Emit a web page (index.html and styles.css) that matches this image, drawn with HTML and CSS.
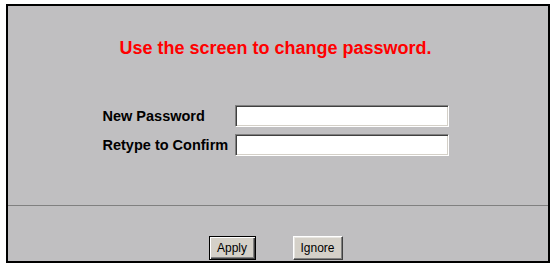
FILE: index.html
```html
<!DOCTYPE html>
<html>
<head>
<meta charset="utf-8">
<link rel="stylesheet" href="styles.css">
</head>
<body>
<div class="frame">
  <div class="title">Use the screen to change password.</div>
  <div class="form">
    <div class="row">
      <label class="label">New Password</label>
      <input class="field" type="password">
    </div>
    <div class="row">
      <label class="label">Retype to Confirm</label>
      <input class="field" type="password">
    </div>
  </div>
  <div class="rule"></div>
  <div class="buttons">
    <button class="btn btn-default">Apply</button>
    <button class="btn">Ignore</button>
  </div>
</div>
</body>
</html>
```
FILE: styles.css
```css
html, body {
  margin: 0;
  padding: 0;
  background: #fff;
}
body {
  width: 554px;
  height: 265px;
  overflow: hidden;
}
.frame {
  margin: 4px 0 0 6px;
  width: 540px;
  height: 255px;
  border: 2px solid #000;
  background: #c0bfc1;
  display: flex;
  flex-direction: column;
  font-family: "Liberation Sans", Arial, sans-serif;
  overflow: hidden;
}
.title {
  margin-top: 32px;
  padding-right: 5px;
  text-align: center;
  color: #ff0000;
  font-weight: bold;
  font-size: 18px;
  line-height: 21px;
}
.form {
  margin-top: 46px;
  align-self: center;
  margin-right: 5px;
  display: flex;
  flex-direction: column;
  gap: 7px;
}
.row {
  display: flex;
  align-items: center;
  height: 22px;
}
.label {
  width: 132px;
  font-size: 14.5px;
  font-weight: bold;
  color: #000;
  line-height: 22px;
}
.field {
  box-sizing: border-box;
  width: 214px;
  height: 22px;
  margin: 0;
  padding: 0 3px;
  background: #fff;
  border: 1px solid;
  border-color: #808080 #fff #fff #808080;
  box-shadow: inset 1px 1px 0 #404040, inset -1px -1px 0 #d4d0c8;
  outline: none;
}
.rule {
  margin-top: 49px;
  height: 1px;
  background: #808080;
}
.buttons {
  margin-top: 30px;
  align-self: center;
  margin-right: 5px;
  display: flex;
  gap: 37px;
}
.btn {
  box-sizing: border-box;
  height: 24px;
  width: 50px;
  margin: 0;
  padding: 0;
  font-family: "Liberation Sans", Arial, sans-serif;
  font-size: 12px;
  color: #000;
  background: #d4d0c8;
  border: 1px solid;
  border-color: #fff #404040 #404040 #fff;
  box-shadow: inset -1px -1px 0 #808080, inset 1px 1px 0 #e8e6e2;
}
.btn-default {
  width: 47px;
  border: 1px solid #000;
  box-shadow: inset 1px 1px 0 #fff, inset -1px -1px 0 #404040, inset -2px -2px 0 #808080;
}
```
